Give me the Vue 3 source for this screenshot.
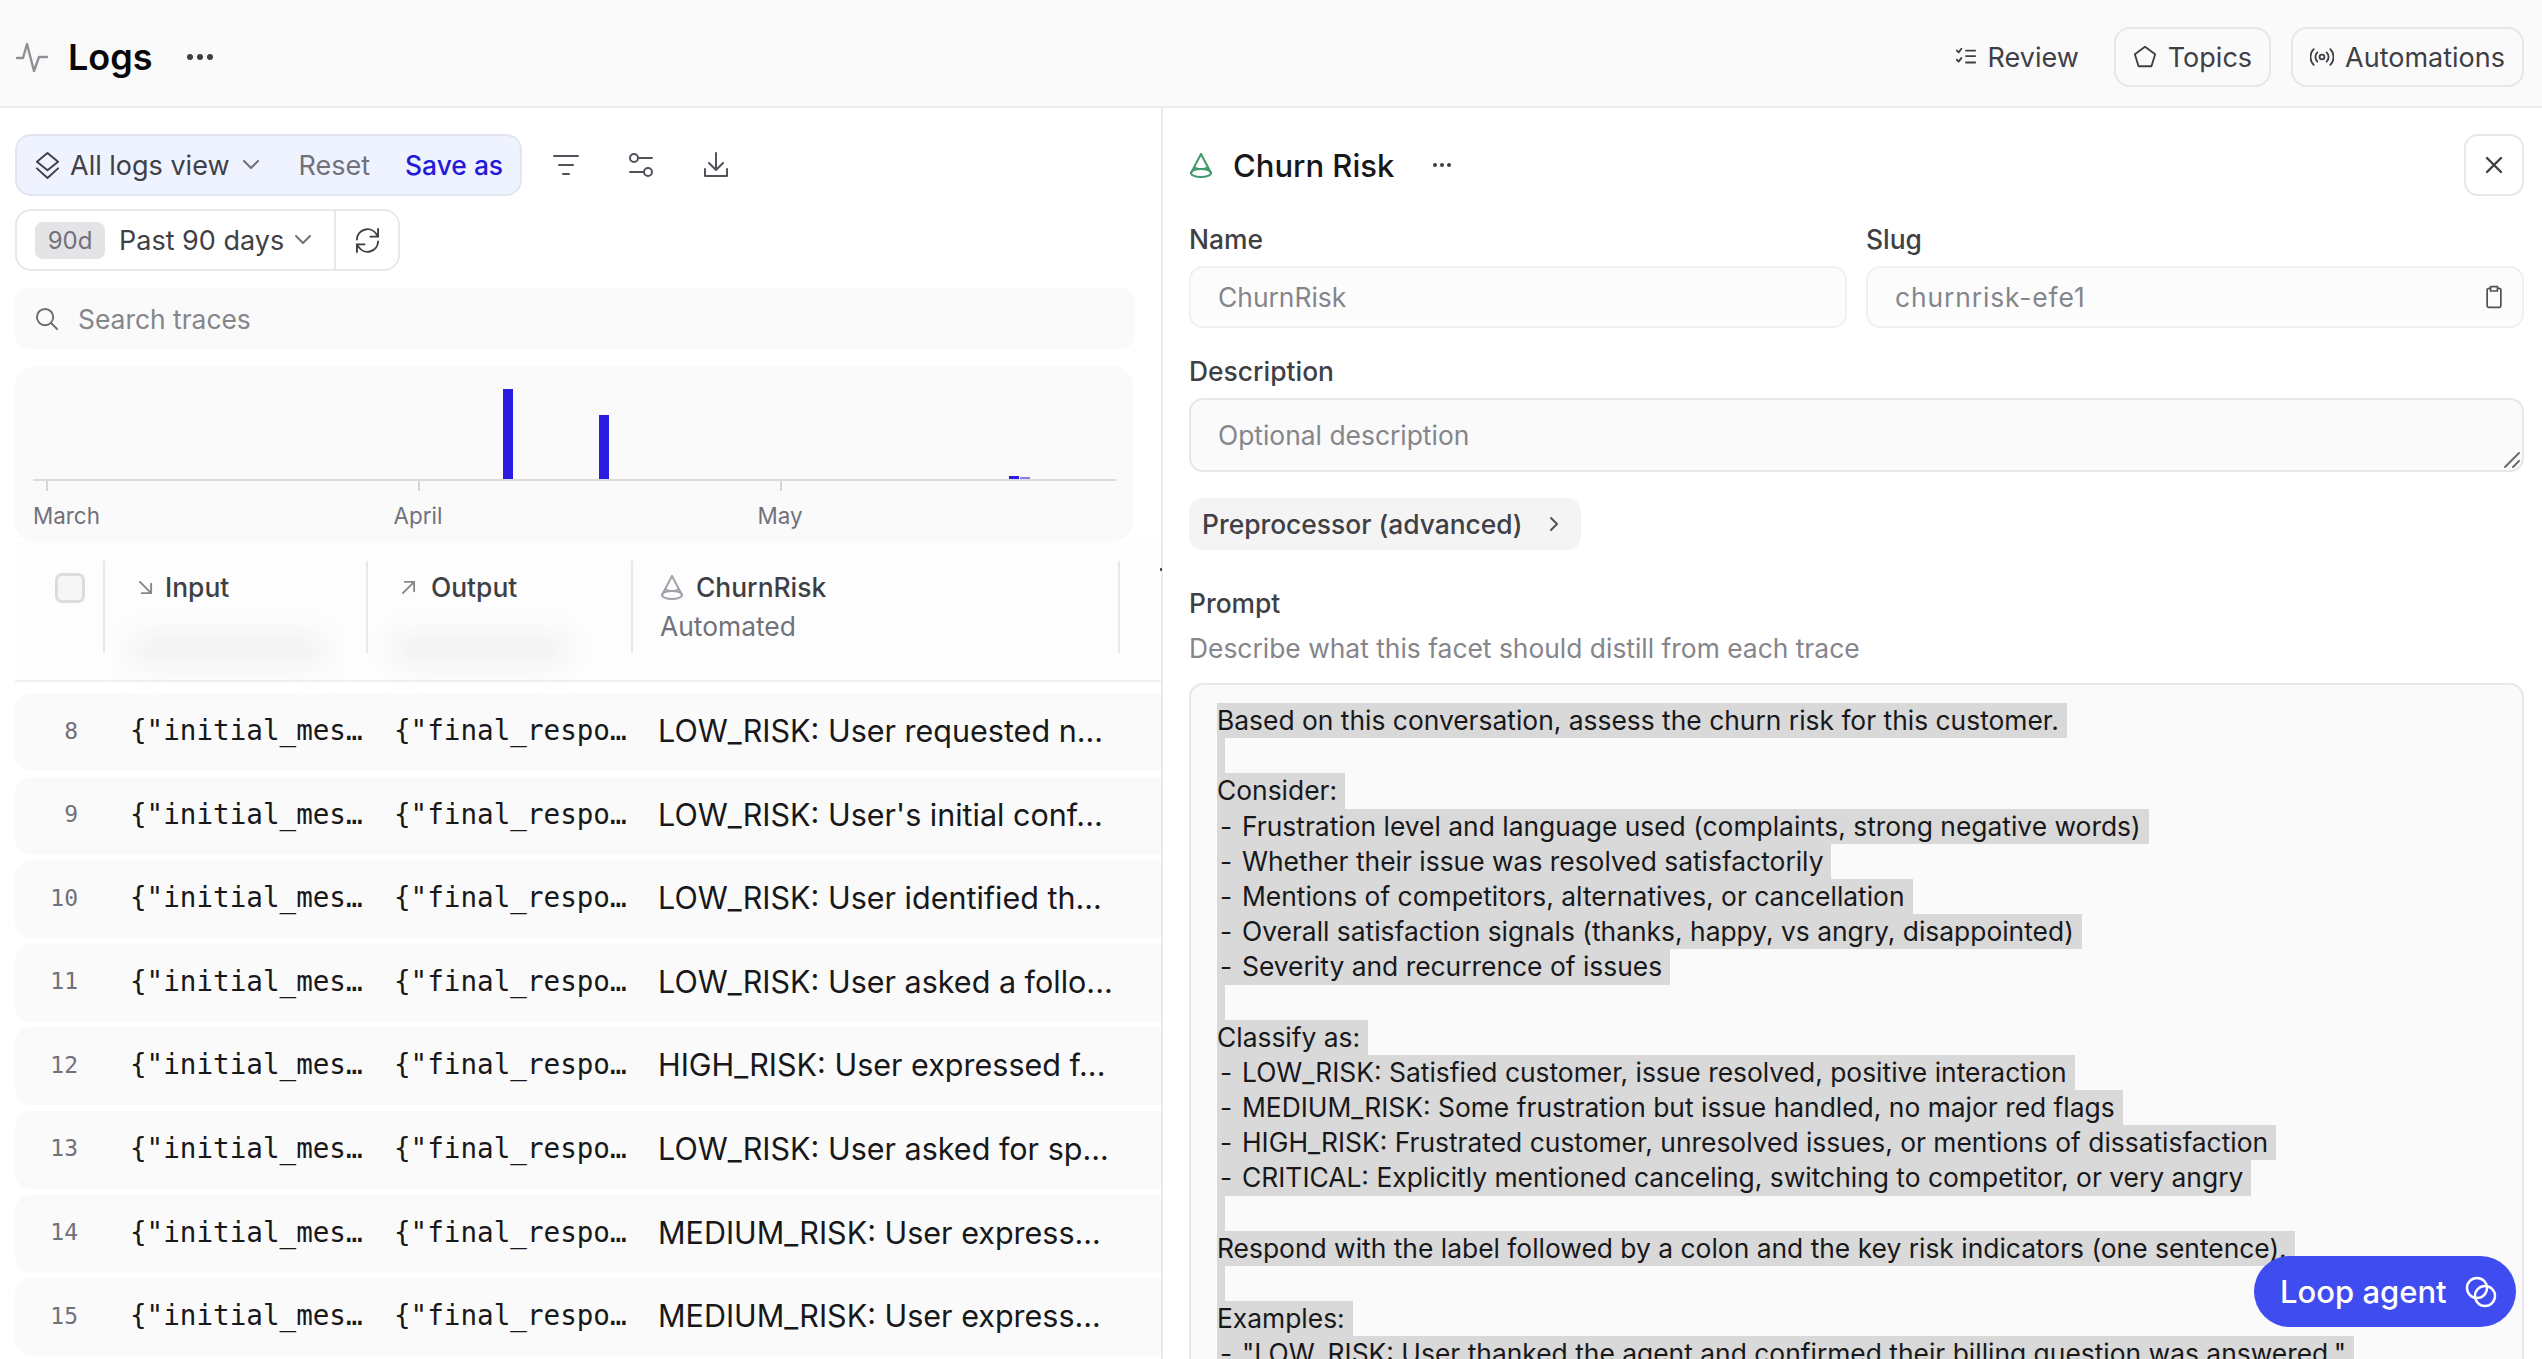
<template>
  <div class="page">
    <!-- top bar -->
    <header class="topbar">
      <div class="topbar-left">
        <svg class="logs-icon" viewBox="0 0 32 32"><path d="M1 17h6l4-14 7 27 5-14h8" /></svg>
        <h1 class="logs-title">Logs</h1>
        <svg class="more-icon" viewBox="0 0 28 8"><circle cx="4" cy="4" r="3" /><circle cx="14" cy="4" r="3" /><circle cx="24" cy="4" r="3" /></svg>
      </div>
      <div class="topbar-right">
        <span class="plain-btn">
          <svg class="nav-icon" viewBox="0 0 24 24"><path d="M2 5l2 2 3-4M2 15l2 2 3-4M12 5h10M12 11h10M12 18h10" /></svg>
          Review
        </span>
        <span class="outline-btn">
          <svg class="nav-icon big" viewBox="0 0 26 26"><path d="M13 2l11 8-4 13H6L2 10z" /></svg>
          Topics
        </span>
        <span class="outline-btn">
          <svg class="nav-icon big" viewBox="0 0 26 26">
            <circle cx="13" cy="13" r="2.6" />
            <path d="M8 8a7 7 0 0 0 0 10M18 8a7 7 0 0 1 0 10M4 4.5a12 12 0 0 0 0 17M22 4.5a12 12 0 0 1 0 17" />
          </svg>
          Automations
        </span>
      </div>
    </header>

    <div class="main">
      <!-- logs -->
      <section class="logs-panel">
        <div class="toolbar">
          <div class="view-group">
            <svg class="view-icon" viewBox="0 0 26 30"><path d="M13 2l11 9-11 9-11-9zM2 18l11 10 11-10" /></svg>
            <span class="view-name">All logs view</span>
            <svg class="chevron" viewBox="0 0 16 10"><path d="M1 1l7 7 7-7" /></svg>
            <span class="reset">Reset</span>
            <span class="save-as">Save as</span>
          </div>
          <svg class="tool-icon" viewBox="0 0 26 26"><path d="M1 4h24M6 13h14M10 22h6" /></svg>
          <svg class="tool-icon" viewBox="0 0 26 26">
            <circle cx="6" cy="6" r="4" /><circle cx="20" cy="20" r="4" />
            <path d="M10 6h14M2 20h14" />
          </svg>
          <svg class="tool-icon" viewBox="0 0 26 26"><path d="M13 1v17M6 11l7 7 7-7M2 17v7h22v-7" /></svg>
        </div>

        <div class="date-group">
          <div class="date-main">
            <span class="date-chip">90d</span>
            <span class="date-label">Past 90 days</span>
            <svg class="chevron" viewBox="0 0 16 10"><path d="M1 1l7 7 7-7" /></svg>
          </div>
          <div class="date-refresh">
            <svg viewBox="0 0 26 28"><path d="M2 13a11 11 0 0 1 20-6l2 3M24 15a11 11 0 0 1-20 6l-2-3M24 2v8h-8M2 26v-8h8" /></svg>
          </div>
        </div>

        <div class="search">
          <svg viewBox="0 0 24 24"><circle cx="10.5" cy="10.5" r="8.5" /><path d="M17 17l6 6" /></svg>
          <span>Search traces</span>
        </div>

        <div class="chart">
          <div class="plot">
            <i v-for="bar in bars" :key="bar.x" class="bar" :style="{ left: bar.x + 'px', height: bar.h + 'px', opacity: bar.o }"></i>
            <i v-for="tick in ticks" :key="tick.label" class="tick" :style="{ left: tick.x + 'px' }"></i>
            <span v-for="tick in ticks" :key="tick.label + '-l'" class="tick-label" :class="{ first: tick.first }" :style="{ left: tick.x + 'px' }">{{ tick.label }}</span>
          </div>
        </div>

        <div class="table-head">
          <i class="smudge one"></i>
          <i class="smudge two"></i>
          <div class="th th-check"><span class="checkbox"></span></div>
          <div class="th th-col">
            <div class="th-title">
              <svg class="arrow" viewBox="0 0 16 16"><path d="M2 2l12 12M14 4v10H4" /></svg>
              Input
            </div>
          </div>
          <div class="th th-col">
            <div class="th-title">
              <svg class="arrow" viewBox="0 0 16 16"><path d="M2 14L14 2M4 2h10v10" /></svg>
              Output
            </div>
          </div>
          <div class="th th-risk">
            <div class="th-title">
              <svg class="cone" viewBox="0 0 24 26"><path d="M12 2L2 21M12 2l10 19" /><ellipse cx="12" cy="21" rx="10" ry="4" /><path d="M5 15.5c4 2 10 2 14 0" /></svg>
              ChurnRisk
            </div>
            <div class="th-sub">Automated</div>
          </div>
          <i class="grip"></i>
        </div>

        <div class="rows">
          <div v-for="row in rows" :key="row.id" class="row">
            <span class="row-id">{{ row.id }}</span>
            <span class="mono cell-input">{"initial_mes…</span>
            <span class="mono cell-output">{"final_respo…</span>
            <span class="risk">{{ row.risk }}</span>
          </div>
        </div>
      </section>

      <!-- facet detail -->
      <section class="detail">
        <div class="detail-head">
          <svg class="cone green" viewBox="0 0 24 26"><path d="M12 2L2 21M12 2l10 19" /><ellipse cx="12" cy="21" rx="10" ry="4" /><path d="M5 15.5c4 2 10 2 14 0" /></svg>
          <h2>Churn Risk</h2>
          <svg class="small-more" viewBox="0 0 20 6"><circle cx="3" cy="3" r="2" /><circle cx="10" cy="3" r="2" /><circle cx="17" cy="3" r="2" /></svg>
          <span class="close">
            <svg viewBox="0 0 18 18"><path d="M2 2l14 14M16 2L2 16" /></svg>
          </span>
        </div>

        <div class="name-slug">
          <div class="field">
            <label>Name</label>
            <div class="input">ChurnRisk</div>
          </div>
          <div class="field">
            <label>Slug</label>
            <div class="input slug">
              churnrisk-efe1
              <svg viewBox="0 0 20 28"><path d="M6 4H4a2 2 0 0 0-2 2v18a2 2 0 0 0 2 2h12a2 2 0 0 0 2-2V6a2 2 0 0 0-2-2h-2M6 2h8v5H6z" /></svg>
            </div>
          </div>
        </div>

        <label class="desc-label">Description</label>
        <div class="textarea">
          Optional description
          <svg class="resize" viewBox="0 0 16 16"><path d="M1 15L15 1M9 15l6-6" /></svg>
        </div>

        <div class="preprocessor">
          Preprocessor (advanced)
          <svg viewBox="0 0 10 16"><path d="M2 2l6 6-6 6" /></svg>
        </div>

        <label class="prompt-label">Prompt</label>
        <p class="prompt-hint">Describe what this facet should distill from each trace</p>
        <div class="prompt-box">
          <div v-for="(line, i) in promptLines" :key="i" class="prompt-line">
            <span><i v-if="line.startsWith('- ')" class="dash">-</i>{{ line.replace(/^- /, '') }}</span>
          </div>
        </div>
      </section>
    </div>

    <button class="loop-btn">
      Loop agent
      <svg viewBox="0 0 32 32"><circle cx="12" cy="12" r="10" /><circle cx="20" cy="20" r="10" /></svg>
    </button>
  </div>
</template>

<script setup>
const bars = [
  { x: 470, h: 90, o: 1 },
  { x: 566, h: 64, o: 1 },
  { x: 976, h: 3, o: 1 },
  { x: 987, h: 2, o: 0.55 },
]

const ticks = [
  { x: 13, label: 'March', first: true },
  { x: 385, label: 'April' },
  { x: 747, label: 'May' },
]

const rows = [
  { id: 8, risk: 'LOW_RISK: User requested n...' },
  { id: 9, risk: "LOW_RISK: User's initial conf..." },
  { id: 10, risk: 'LOW_RISK: User identified th...' },
  { id: 11, risk: 'LOW_RISK: User asked a follo...' },
  { id: 12, risk: 'HIGH_RISK: User expressed f...' },
  { id: 13, risk: 'LOW_RISK: User asked for sp...' },
  { id: 14, risk: 'MEDIUM_RISK: User express...' },
  { id: 15, risk: 'MEDIUM_RISK: User express...' },
]

const promptLines = [
  'Based on this conversation, assess the churn risk for this customer.',
  '',
  'Consider:',
  '- Frustration level and language used (complaints, strong negative words)',
  '- Whether their issue was resolved satisfactorily',
  '- Mentions of competitors, alternatives, or cancellation',
  '- Overall satisfaction signals (thanks, happy, vs angry, disappointed)',
  '- Severity and recurrence of issues',
  '',
  'Classify as:',
  '- LOW_RISK: Satisfied customer, issue resolved, positive interaction',
  '- MEDIUM_RISK: Some frustration but issue handled, no major red flags',
  '- HIGH_RISK: Frustrated customer, unresolved issues, or mentions of dissatisfaction',
  '- CRITICAL: Explicitly mentioned canceling, switching to competitor, or very angry',
  '',
  'Respond with the label followed by a colon and the key risk indicators (one sentence).',
  '',
  'Examples:',
  '- "LOW_RISK: User thanked the agent and confirmed their billing question was answered."',
]
</script>

<style>
html,
body {
  margin: 0;
  background: #fff;
}
</style>

<style scoped>
* {
  box-sizing: border-box;
}

.page {
  position: relative;
  width: 2542px;
  height: 1359px;
  overflow: hidden;
  background: #fff;
  color: #3f3f46;
  font-family: Inter, "Liberation Sans", sans-serif;
  font-size: 26.4px;
}

svg {
  fill: none;
  stroke: currentColor;
  stroke-width: 2;
  stroke-linecap: round;
  stroke-linejoin: round;
  flex: none;
}

/* top bar */
.topbar {
  display: flex;
  justify-content: space-between;
  align-items: center;
  height: 108px;
  padding: 8px 18px 0 16px;
  background: #fafafa;
  border-bottom: 2px solid #ececee;
  font-size: 27px;
}

.topbar-left,
.topbar-right {
  display: flex;
  align-items: center;
}

.logs-icon {
  width: 32px;
  height: 32px;
  color: #8f8f96;
  stroke-width: 2.4;
}

.logs-title {
  margin: 0 0 0 20px;
  font-size: 36px;
  font-weight: 600;
  color: #09090b;
}

.more-icon {
  width: 28px;
  height: 8px;
  margin-left: 33px;
  fill: #3f3f46;
  stroke: none;
}

.topbar-right {
  gap: 20px;
}

.plain-btn,
.outline-btn {
  display: flex;
  align-items: center;
  gap: 11px;
  height: 60px;
}

.plain-btn {
  margin-right: 15px;
}

.outline-btn {
  padding: 0 17px;
  border: 2px solid #e7e7e9;
  border-radius: 16px;
}

.nav-icon {
  width: 22px;
  height: 22px;
}

.nav-icon.big {
  width: 24px;
  height: 24px;
}

.main {
  display: flex;
  height: 1251px;
}

/* logs */
.logs-panel {
  display: flex;
  flex-direction: column;
  width: 1163px;
  padding: 26px 0 0 15px;
  border-right: 2px solid #e9e9eb;
  flex: none;
}

.toolbar {
  display: flex;
  align-items: center;
  gap: 49px;
  height: 62px;
  font-size: 27px;
}

.view-group {
  display: flex;
  align-items: center;
  width: 507px;
  height: 62px;
  margin-right: -18px;
  padding-left: 18px;
  background: #eff3ff;
  border: 2px solid #e3e6ee;
  border-radius: 16px;
  white-space: nowrap;
}

.view-icon {
  width: 25px;
  height: 29px;
  color: #3f3f46;
}

.view-name {
  margin-left: 10px;
}

.chevron {
  width: 16px;
  height: 10px;
  color: #71717a;
}

.view-group .chevron {
  margin-left: 13px;
}

.reset {
  margin-left: 40px;
  color: #71717a;
}

.save-as {
  margin-left: 35px;
  color: #2418d9;
  font-size: 26.4px;
  font-weight: 500;
}

.tool-icon {
  width: 26px;
  height: 26px;
  color: #52525b;
}

.date-group {
  display: flex;
  width: 385px;
  height: 62px;
  margin-top: 13px;
  border: 2px solid #e8e8ea;
  border-radius: 16px;
  font-size: 27px;
}

.date-main {
  display: flex;
  align-items: center;
  width: 319px;
  padding-left: 18px;
  border-right: 2px solid #e8e8ea;
}

.date-chip {
  display: flex;
  justify-content: center;
  align-items: center;
  width: 70px;
  height: 37px;
  background: #e4e4e7;
  border-radius: 8px;
  color: #71717a;
  font-size: 24px;
}

.date-label {
  margin: 0 11px 0 14px;
}

.date-refresh {
  display: flex;
  flex: 1;
  justify-content: center;
  align-items: center;
}

.date-refresh svg {
  width: 25px;
  height: 27px;
}

.search {
  display: flex;
  align-items: center;
  gap: 20px;
  width: 1120px;
  height: 61px;
  margin-top: 17px;
  padding-left: 20px;
  background: #fafafa;
  border-radius: 14px;
  color: #85858c;
}

.search svg {
  width: 23px;
  height: 23px;
  color: #6b6b73;
}

.chart {
  width: 1118px;
  height: 176px;
  margin-top: 17px;
  padding: 22px 0 0 18px;
  background: #fafafa;
  border-radius: 20px;
}

.plot {
  position: relative;
  width: 1083px;
  height: 91px;
  border-bottom: 2px solid #dcdce0;
  box-sizing: content-box;
}

.bar {
  position: absolute;
  bottom: 0;
  width: 10px;
  background: #2a1ce0;
}

.tick {
  position: absolute;
  top: 93px;
  width: 2px;
  height: 10px;
  background: #d6d6da;
}

.tick-label {
  position: absolute;
  top: 113px;
  transform: translateX(-50%);
  font-size: 22.4px;
  line-height: 30px;
  color: #71717a;
}

.tick-label.first {
  left: 0 !important;
  transform: none;
}

.table-head {
  position: relative;
  display: flex;
  flex: none;
  height: 140px;
  padding-top: 19px;
  background: #fdfdfd;
  border-bottom: 2px solid #f0f0f1;
  overflow: visible;
}

.smudge {
  position: absolute;
  top: 94px;
  height: 26px;
  background: #efefef;
  filter: blur(14px);
}

.smudge.one {
  left: 118px;
  width: 190px;
}

.smudge.two {
  left: 380px;
  width: 170px;
}

.th {
  position: relative;
  height: 92px;
  border-right: 2px solid #e8e8ea;
}

.th-check {
  width: 90px;
  padding: 12px 0 0 40px;
}

.checkbox {
  display: block;
  width: 30px;
  height: 30px;
  background: #f6f6f7;
  border: 3px solid #dcdce0;
  border-radius: 7px;
}

.th-col {
  width: 263px;
  padding-left: 33px;
}

.th-col + .th-col {
  width: 265px;
}

.th-risk {
  width: 487px;
  padding-left: 27px;
}

.th-title {
  display: flex;
  align-items: center;
  gap: 12px;
  height: 30px;
  margin-top: 11px;
  font-weight: 500;
}

.th-col + .th-col .th-title {
  gap: 15px;
}

.arrow {
  width: 15px;
  height: 15px;
  color: #85858c;
}

.cone {
  width: 24px;
  height: 26px;
  color: #a1a1aa;
}

.cone.green {
  color: #3f9a6b;
}

.th-sub {
  margin-top: 7px;
  line-height: 34px;
  color: #71717a;
}

.grip {
  position: absolute;
  top: 26px;
  left: 1145px;
  width: 2px;
  height: 3px;
  background: #52525b;
}

.rows {
  display: flex;
  flex-direction: column;
  gap: 5.6px;
  margin-top: 11px;
}

.row {
  display: flex;
  flex: none;
  align-items: center;
  height: 78px;
  padding-bottom: 3px;
  background: #fafafa;
  border-radius: 16px 0 0 16px;
  color: #18181b;
}

.row-id {
  width: 101px;
  padding-right: 38px;
  text-align: right;
  font-family: "DejaVu Sans Mono", "Liberation Mono", monospace;
  font-size: 23px;
  color: #71717a;
}

.mono {
  font-family: "DejaVu Sans Mono", "Liberation Mono", monospace;
  font-size: 27.6px;
  white-space: nowrap;
}

.cell-input {
  width: 264px;
  margin-left: 14px;
}

.cell-output {
  width: 264px;
}

.risk {
  font-size: 30.5px;
  white-space: nowrap;
}

/* detail */
.detail {
  flex: 1;
  min-width: 0;
  padding: 26px 18px 0 26px;
}

.detail-head {
  display: flex;
  align-items: center;
  height: 62px;
}

.detail-head h2 {
  margin: 0 0 0 20px;
  font-size: 31px;
  font-weight: 500;
  color: #18181b;
}

.small-more {
  width: 20px;
  height: 6px;
  margin-left: 38px;
  fill: #3f3f46;
  stroke: none;
}

.close {
  display: flex;
  justify-content: center;
  align-items: center;
  width: 60px;
  height: 62px;
  margin-left: auto;
  border: 2px solid #e7e7e9;
  border-radius: 14px;
}

.close svg {
  width: 18px;
  height: 18px;
  stroke-width: 2.4;
}

.name-slug {
  display: flex;
  gap: 19px;
  margin-top: 25px;
}

.field {
  flex: 1;
}

label {
  display: block;
  line-height: 36px;
  font-weight: 500;
}

.input {
  display: flex;
  justify-content: space-between;
  align-items: center;
  height: 62px;
  margin-top: 9px;
  padding: 0 18px 0 27px;
  background: #fcfcfc;
  border: 2px solid #f0f0f1;
  border-radius: 14px;
  color: #85858c;
}

.slug {
  letter-spacing: 0.9px;
}

.slug svg {
  width: 20px;
  height: 24px;
  color: #52525b;
}

.desc-label {
  margin-top: 25px;
}

.textarea {
  position: relative;
  height: 74px;
  margin-top: 9px;
  padding: 18px 27px;
  background: #fafafa;
  border: 2px solid #e7e7e9;
  border-radius: 14px;
  line-height: 34px;
  color: #85858c;
}

.resize {
  position: absolute;
  right: 2px;
  bottom: 2px;
  width: 16px;
  height: 16px;
  color: #6b6b73;
}

.preprocessor {
  display: flex;
  align-items: center;
  gap: 27px;
  width: 392px;
  height: 52px;
  margin-top: 26px;
  padding-left: 13px;
  background: #f4f4f5;
  border-radius: 14px;
  font-weight: 500;
}

.preprocessor svg {
  width: 10px;
  height: 16px;
  color: #52525b;
}

.prompt-label {
  margin-top: 35px;
}

.prompt-hint {
  margin: 9px 0 0;
  line-height: 36px;
  color: #85858c;
}

.prompt-box {
  height: 800px;
  margin-top: 17px;
  padding: 18px 26px;
  background: #fafafa;
  border: 2px solid #e7e7e9;
  border-radius: 14px;
  color: #18181b;
}

.prompt-line {
  height: 35.2px;
}

.prompt-line span {
  display: inline-block;
  min-width: 7px;
  height: 35.2px;
  padding-right: 8px;
  background: #d9d9d9;
  line-height: 35.2px;
  white-space: pre;
}

.dash {
  display: inline-block;
  width: 25px;
  padding-left: 3px;
  font-style: normal;
}

.loop-btn {
  position: absolute;
  right: 26px;
  bottom: 32px;
  display: flex;
  align-items: center;
  gap: 18px;
  width: 262px;
  height: 71px;
  padding: 0 0 0 26px;
  background: #3f4cf0;
  border: none;
  border-radius: 36px;
  color: #fff;
  font-family: inherit;
  font-size: 31px;
  font-weight: 500;
}

.loop-btn svg {
  width: 32px;
  height: 32px;
  stroke-width: 2.4;
}
</style>
